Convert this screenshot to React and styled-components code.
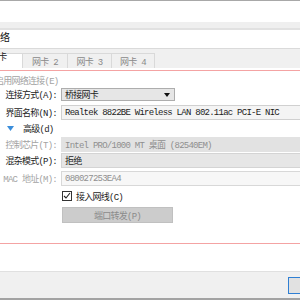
import React from 'react'
import styled, { createGlobalStyle } from 'styled-components'

const Global = createGlobalStyle`
  html, body { margin: 0; padding: 0; background: #fff; overflow: hidden; }
  body {
    width: 300px;
    height: 300px;
    font-family: "Liberation Mono", "Noto Sans CJK SC", monospace;
    font-size: 9px;
    letter-spacing: -0.75px;
    color: #1c1c1c;
  }
`

const Window = styled.div`
  width: 480px;
  height: 300px;
  margin-left: -22px;
  display: flex;
  flex-direction: column;
  border-top: 1px solid #a8a8a8;
  box-sizing: border-box;
`
const Gap = styled.div`
  flex: none;
  height: ${p => p.h}px;
`
const Band = styled.div`
  flex: none;
  height: 6px;
  background: #efefef;
  border-bottom: 2px solid #e1e1e1;
`
const Title = styled.div`
  flex: none;
  height: 18px;
  line-height: 18px;
  padding-left: 12px;
  font-size: 10px;
  letter-spacing: 0;
  color: #111;
`
const TabStrip = styled.div`
  flex: none;
  height: 19px;
  border-top: 1px solid #dadada;
  background: #f0f0f0;
  display: flex;
  align-items: flex-end;
  padding-left: 3px;
`
const Tab = styled.div`
  height: 15px;
  box-sizing: border-box;
  padding: 0 8px;
  display: flex;
  align-items: center;
  border: 1px solid #d9d9d9;
  border-bottom: none;
  border-left: ${p => (p.first ? '1px solid #d9d9d9' : 'none')};
  background: ${p => (p.active ? '#fff' : '#f0f0f0')};
  color: ${p => (p.active ? '#222' : '#8a8a8a')};
  width: ${p => p.w}px;
  justify-content: center;
`
const Page = styled.div`
  flex: none;
  height: 174px;
  box-sizing: border-box;
  border-top: 1px solid #f4a3a3;
  border-bottom: 1px solid #f4a3a3;
  display: flex;
  flex-direction: column;
  padding-right: 12px;
`
const Row = styled.div`
  flex: none;
  display: grid;
  grid-template-columns: 79px 1fr;
  column-gap: 4px;
  align-items: center;
  height: ${p => p.h}px;
  margin-top: ${p => p.mt}px;
`
const Line = styled.div`
  flex: none;
  display: flex;
  align-items: center;
  gap: ${p => p.gap || 4}px;
  height: ${p => p.h}px;
  margin-top: ${p => p.mt}px;
  padding-left: ${p => p.pl}px;
  color: ${p => (p.dim ? '#a3a3a3' : '#1c1c1c')};
`
const Label = styled.div`
  text-align: right;
  white-space: nowrap;
  color: ${p => (p.dim ? '#a3a3a3' : '#1c1c1c')};
`
const Field = styled.div`
  height: ${p => p.h || 15}px;
  box-sizing: border-box;
  display: flex;
  align-items: center;
  padding: 0 3px;
  white-space: nowrap;
  overflow: hidden;
  background: ${p => p.bg};
  border: 1px solid ${p => p.bd};
  color: ${p => (p.dim ? '#8f8f8f' : '#1c1c1c')};
`
const Combo = styled(Field)`
  width: 114px;
  justify-content: space-between;
  padding-right: 4px;
`
const Check = styled.div`
  display: flex;
  align-items: center;
  gap: 4px;
  padding-left: 1px;
`
const Box = styled.span`
  width: 10px;
  height: 10px;
  box-sizing: border-box;
  border: 1px solid ${p => (p.dim ? '#bdbdbd' : '#333')};
  background: #fff;
  display: flex;
  align-items: center;
  justify-content: center;
`
const Button = styled.div`
  width: 111px;
  height: 16px;
  margin-left: 1px;
  box-sizing: border-box;
  border: 1px solid #c0c0c0;
  background: #cccccc;
  color: #8b8b8b;
  display: flex;
  align-items: center;
  justify-content: center;
`
const Footer = styled.div`
  flex: none;
  height: 29px;
  box-sizing: border-box;
  border-top: 1px solid #e0e0e0;
  border-bottom: 2px solid #a3a3a3;
  background: #f0f0f0;
  display: flex;
  justify-content: flex-end;
  align-items: flex-start;
  gap: 6px;
  padding: 5px 14px 0 0;
`
const FootButton = styled.div`
  width: 75px;
  height: 17px;
  box-sizing: border-box;
  border: 1px solid ${p => (p.primary ? '#2f7fd3' : '#adadad')};
  background: #e1e1e1;
  display: flex;
  align-items: center;
  justify-content: center;
`

const Arrow = () => (
  <svg width="6" height="4" viewBox="0 0 6 4"><path d="M0 0h6L3 4z" fill="#111" /></svg>
)
const Tick = () => (
  <svg width="8" height="8" viewBox="0 0 8 8"><path d="M1 4l2 2 4-5" fill="none" stroke="#222" strokeWidth="1.1" /></svg>
)

const tabs = [
  { n: 1, w: 42 },
  { n: 2, w: 45 },
  { n: 3, w: 44 },
  { n: 4, w: 43 },
]

export default function App() {
  return (
    <>
      <Global />
      <Window>
        <Gap h={21} />
        <Band />
        <Title>网络</Title>
        <TabStrip>
          {tabs.map(t => (
            <Tab key={t.n} w={t.w} first={t.n === 1} active={t.n === 1}>网卡 {t.n}</Tab>
          ))}
        </TabStrip>
        <Gap h={2} />
        <Page>
          <Line h={14} mt={2} pl={3} dim>
            <Box dim />
            启用网络连接(E)
          </Line>
          <Row h={13} mt={1}>
            <Label>连接方式(A):</Label>
            <Combo h={13} bg="#e6e6e6" bd="#adadad">
              <span>桥接网卡</span>
              <Arrow />
            </Combo>
          </Row>
          <Row h={15} mt={4}>
            <Label>界面名称(N):</Label>
            <Field bg="#f4f4f4" bd="#d0d0d0">Realtek 8822BE Wireless LAN 802.11ac PCI-E NIC</Field>
          </Row>
          <Line h={14} mt={1} pl={29} gap={9}>
            <svg width="7" height="5" viewBox="0 0 7 5"><path d="M0 0h7L3.5 5z" fill="#3b8edb" /></svg>
            高级(d)
          </Line>
          <Row h={15} mt={2}>
            <Label dim>控制芯片(T):</Label>
            <Field bg="#e2e2e2" bd="#e2e2e2" dim>Intel PRO/1000 MT 桌面 (82540EM)</Field>
          </Row>
          <Row h={15} mt={1}>
            <Label>混杂模式(P):</Label>
            <Field bg="#e6e6e6" bd="#d4d4d4">拒绝</Field>
          </Row>
          <Row h={15} mt={3}>
            <Label dim>MAC 地址(M):</Label>
            <Field bg="#f7f7f7" bd="#d8d8d8" dim>080027253EA4</Field>
          </Row>
          <Row h={14} mt={3}>
            <span />
            <Check>
              <Box><Tick /></Box>
              接入网线(C)
            </Check>
          </Row>
          <Row h={16} mt={4}>
            <span />
            <Button>端口转发(P)</Button>
          </Row>
        </Page>
        <Gap h={27} />
        <Footer>
          <FootButton primary>确定</FootButton>
          <FootButton>取消</FootButton>
        </Footer>
      </Window>
    </>
  )
}
